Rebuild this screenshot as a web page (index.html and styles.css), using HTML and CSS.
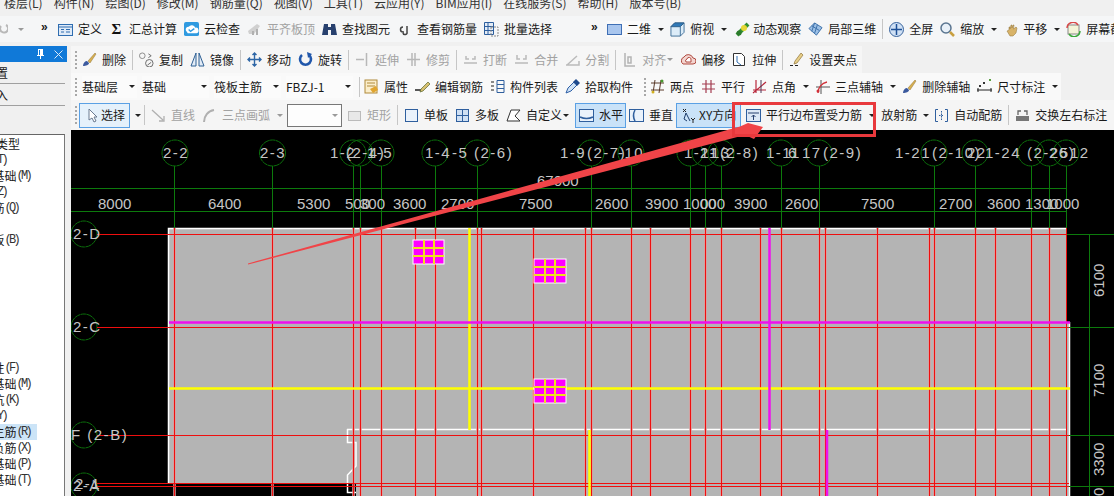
FILE: index.html
```html
<!DOCTYPE html>
<html lang="zh">
<head>
<meta charset="utf-8">
<title>钢筋布置</title>
<link rel="stylesheet" href="styles.css">
</head>
<body>
<nav class="menubar">
  <span class="m1">楼层(L)</span><span>构件(N)</span><span>绘图(D)</span><span>修改(M)</span><span>钢筋量(Q)</span><span>视图(V)</span><span>工具(T)</span><span>云应用(Y)</span><span>BIM应用(I)</span><span>在线服务(S)</span><span>帮助(H)</span><span>版本号(B)</span>
</nav>

<div class="row row1">
  <svg class="undo" viewBox="0 0 10 12"><path d="M8 2a4 4 0 1 1-5 1" fill="none" stroke="#b8b8b8" stroke-width="2"/></svg>
  <i class="caret gray c-undo"></i>
  <span class="more more-a">»</span>
  <div class="it"><svg class="ic" viewBox="0 0 15 15"><rect x=".5" y="2.5" width="14" height="11" fill="#dfeaf7" stroke="#2f6db0"/><path d="M.5 5h14M3 7.500h3M3 10h3M8 7.500h4M8 10h4" stroke="#2f6db0"/></svg>定义</div>
  <div class="it"><span class="ic sigma">Σ</span>汇总计算</div>
  <div class="it"><svg class="ic" viewBox="0 0 16 16"><rect width="16" height="15" rx="2" fill="#2f9ae0"/><path d="M2 9a3 3 0 0 1 3-4 4 4 0 0 1 7 1 3 3 0 0 1 1 6H4z" fill="#fff"/><path d="M5 8l2 2 4-3" fill="none" stroke="#2f9ae0" stroke-width="1.500"/></svg>云检查</div>
  <div class="it off"><svg class="ic" viewBox="0 0 15 15"><path d="M1 9l9-7 3 2-6 8H2z" fill="#d0d0d0"/><path d="M5 13V9h2v4zm4 0V7h2v6z" fill="#b0b0b0"/></svg>平齐板顶</div>
  <div class="it"><svg class="ic" viewBox="0 0 15 15"><path d="M2 2h4v3h3V2h4l2 11H9V8H6v5H0z" fill="#27406e"/></svg>查找图元</div>
  <div class="it"><svg class="ic" viewBox="0 0 15 15"><path d="M6 5a2.500 2.500 0 1 0 0 5h1M10 4v6a2 2 0 0 1-4 1" fill="none" stroke="#444" stroke-width="1.500"/></svg>查看钢筋量</div>
  <div class="it"><svg class="ic" viewBox="0 0 15 15"><path d="M.5.5h9v12h-9zM.5 4.500h9M.5 8.500h9M4 .5v12" fill="#e4ecf6" stroke="#2d5f9e"/><path d="M7 5h7v9H7z" fill="none" stroke="#888" stroke-dasharray="2 1"/></svg>批量选择</div>
  <span class="more more-b">»</span>
  <div class="it it-2d"><svg class="ic" viewBox="0 0 15 15"><rect x=".5" y="2.500" width="14" height="10" fill="#a9c6ee" stroke="#3f6fb5"/></svg>二维</div>
  <i class="caret"></i>
  <div class="it"><svg class="ic" viewBox="0 0 16 16"><path d="M1 5l4-4h10v10l-4 4H1z" fill="#dcecf8" stroke="#3d6d96"/><path d="M5 1h10L11 5H1z" fill="#2f79b8" stroke="#2f5f8a"/><path d="M11 5v10" stroke="#3d6d96"/></svg>俯视</div>
  <i class="caret c-gap"></i>
  <div class="it tight"><svg class="ic" viewBox="0 0 15 15"><path d="M2 13L13 2" stroke="#2f8f2f" stroke-width="4"/><circle cx="9" cy="6" r="3" fill="#e8d838"/><circle cx="4" cy="11" r="2.500" fill="#2c7a2c"/></svg>动态观察</div>
  <div class="it"><svg class="ic" viewBox="0 0 16 16"><path d="M1 7l6-6 8 5-6 8z" fill="#9cc0e6" stroke="#3a6ea8"/><path d="M4 4l8 5M7 1l-3 9M10 3l-3 9" stroke="#3a6ea8"/></svg>局部三维</div>
  <b class="sep"></b>
  <div class="it"><svg class="ic" viewBox="0 0 15 15"><circle cx="7.500" cy="7.500" r="7" fill="#cfe0f4" stroke="#36629c"/><path d="M7.500 2v11M2 7.500h11" stroke="#1d4f96" stroke-width="1.500"/></svg>全屏</div>
  <div class="it"><svg class="ic" viewBox="0 0 15 15"><circle cx="6" cy="6" r="5" fill="#e8f0f8" stroke="#5a7590" stroke-width="1.500"/><path d="M10 10l4 4" stroke="#c9a040" stroke-width="2.500"/></svg>缩放</div>
  <i class="caret c-gap"></i>
  <div class="it tight"><svg class="ic" viewBox="0 0 15 15"><path d="M2 9l2-1V5h1v2l1-4h1v3l1-3h1l-.5 4L11 5l1 1-1 5-3 3H5z" fill="#d8b368" stroke="#8f7338" stroke-width=".5"/></svg>平移</div>
  <i class="caret"></i>
  <div class="it"><svg class="ic" viewBox="0 0 15 15"><rect x="2" y="3" width="11" height="9" fill="#f4f4d8" stroke="#888"/><path d="M1 6a6 6 0 0 1 11-3" fill="none" stroke="#d84848" stroke-width="1.500"/><path d="M14 9a6 6 0 0 1-11 3" fill="none" stroke="#38a838" stroke-width="1.500"/></svg>屏幕截图</div>
</div>

<div class="work">
  <aside class="side">
    <div class="panel">
      <div class="title"><svg class="pin" viewBox="0 0 9 10"><path d="M2 0h5v6h1v1H5v3H4V7H1V6h1zM3 1v5h1V1z" fill="#fff"/></svg><svg class="close" viewBox="0 0 9 9"><path d="M.5.500l8 8M8.500.5l-8 8" stroke="#dbe9f8"/></svg></div>
      <div class="tab">置</div>
      <div class="tab">入</div>
      <ul class="list">
        <li class="e20">类型</li>
        <li class="e8"><span class="k">(T)</span></li>
        <li class="e32">基础<span class="k">(M)</span></li>
        <li class="e8"><span class="k">(Z)</span></li>
        <li class="e20">筋<span class="k">(Q)</span></li>
        <li></li>
        <li class="e20">板<span class="k">(B)</span></li>
        <li></li><li></li><li></li><li></li><li></li><li></li><li></li>
        <li class="e20">性<span class="k">(F)</span></li>
        <li class="e32">基础<span class="k">(M)</span></li>
        <li class="e20">坑<span class="k">(K)</span></li>
        <li class="e8"><span class="k">(Y)</span></li>
        <li class="e32 sel">主筋<span class="k">(R)</span></li>
        <li class="e32">负筋<span class="k">(X)</span></li>
        <li class="e32">基础<span class="k">(P)</span></li>
        <li class="e32">基础<span class="k">(T)</span></li>
      </ul>
    </div>
  </aside>

  <main class="main">
    <div class="row row2">
      <div class="band band2">
        <i class="grip g-start"></i>
        <div class="it"><svg class="ic" viewBox="0 0 15 15"><path d="M1 14c0-3 2-5 4-5l2 2c0 2-3 3-6 3z" fill="#3c5a9e"/><path d="M6 9l7-8 1 1-6 9z" fill="#d8b050" stroke="#8f7338" stroke-width=".5"/></svg>删除</div>
        <b class="sep"></b>
        <div class="it"><svg class="ic" viewBox="0 0 16 16"><circle cx="3.500" cy="4" r="3" fill="none" stroke="#888"/><circle cx="11" cy="12" r="4" fill="none" stroke="#666"/><path d="M10 2l3 2-3 2M13 11l-4 3" fill="none" stroke="#666"/></svg>复制</div>
        <div class="it"><svg class="ic" viewBox="0 0 15 15"><path d="M6 1L1 14h5zM9 1l5 13H9z" fill="#e2ebf6" stroke="#2f6094"/></svg>镜像</div>
        <b class="sep"></b>
        <div class="it"><svg class="ic" viewBox="0 0 15 15"><path d="M7.500 1v13M1 7.500h13M5.500 3l2-2 2 2M5.500 12l2 2 2-2M3 5.500l-2 2 2 2M12 5.500l2 2-2 2" fill="none" stroke="#2e66a6" stroke-width="1.400"/></svg>移动</div>
        <div class="it"><svg class="ic" viewBox="0 0 15 15"><path d="M4 3a5.500 5.500 0 1 0 7 0" fill="none" stroke="#2157ab" stroke-width="2.600"/><path d="M9 0l1 6 4-4z" fill="#2157ab"/></svg>旋转</div>
        <b class="sep"></b>
        <div class="it off"><svg class="ic" viewBox="0 0 15 15"><path d="M1 7.500h8M11.500 1v13" stroke="#b8b8b8" stroke-width="1.500"/></svg>延伸</div>
        <div class="it off"><svg class="ic" viewBox="0 0 15 15"><path d="M1 7.500h13M6 1v13M9 1v13" stroke="#b8b8b8" stroke-width="1.500"/></svg>修剪</div>
        <b class="sep"></b>
        <div class="it off"><svg class="ic" viewBox="0 0 15 15"><path d="M1 11h13M3 4v3h3M12 4v3H9" fill="none" stroke="#bbb" stroke-width="1.500"/></svg>打断</div>
        <div class="it off"><svg class="ic" viewBox="0 0 15 15"><path d="M1 11h13M3 3v4h3M12 3v4H9" fill="none" stroke="#bbb" stroke-width="1.500"/></svg>合并</div>
        <div class="it off"><svg class="ic" viewBox="0 0 15 15"><path d="M1 13h13V9M2 13l10-9" fill="none" stroke="#bbb" stroke-width="1.500"/></svg>分割</div>
        <b class="sep"></b>
        <div class="it off"><svg class="ic" viewBox="0 0 15 15"><path d="M3 1v13h10M6 5h3v6H6z" fill="none" stroke="#b4b4b4" stroke-width="1.500"/></svg>对齐</div>
        <i class="caret gray c-tuck c-gap"></i>
        <div class="it"><svg class="ic" viewBox="0 0 15 15"><path d="M2 12a4 4 0 0 1 1-7 5 5 0 0 1 9 1 3 3 0 0 1 0 6z" fill="#f3d5d0" stroke="#b04a40"/><path d="M5 10a2 2 0 0 1 1-3 2 2 0 0 1 4 1v2z" fill="#fff" stroke="#b04a40"/></svg>偏移</div>
        <div class="it"><svg class="ic" viewBox="0 0 15 15"><path d="M1.500 1.500h8l3 3v9h-11z" fill="#fff" stroke="#333"/><path d="M5 4v6l4 3" fill="none" stroke="#2f6db0"/></svg>拉伸</div>
        <b class="sep"></b>
        <div class="it"><svg class="ic" viewBox="0 0 15 15"><path d="M1 13h3v1H1zM6 13h3v1H6z" fill="#222"/><path d="M6 9l6-8 2 2-6 8-3 1z" fill="#e8cf88" stroke="#8f7338" stroke-width=".7"/></svg>设置夹点</div>
      </div>
    </div>

    <div class="row row3">
      <div class="band band3">
        <i class="grip g-start"></i>
        <div class="combos">
          <div class="combo cw-s">基础层<i class="caret"></i></div>
          <div class="combo cw-m">基础<i class="caret"></i></div>
          <div class="combo cw-m">筏板主筋<i class="caret"></i></div>
          <div class="combo cw-m">FBZJ-1<i class="caret"></i></div>
        </div>
        <b class="sep"></b>
        <div class="it it-prop"><svg class="ic" viewBox="0 0 15 15"><rect x="1" y="1" width="12" height="13" fill="#fbeecb" stroke="#b08a3a"/><path d="M3 4h8M3 7h8" stroke="#b08a3a"/><path d="M6 10l6-3 2 4-5 3z" fill="#e0a530"/></svg>属性</div>
        <div class="it"><svg class="ic" viewBox="0 0 15 15"><path d="M0 11h8" stroke="#222" stroke-width="1.500"/><path d="M6 10l7-7 2 2-7 7-3 1z" fill="#d8c070" stroke="#57662f" stroke-width=".7"/></svg>编辑钢筋</div>
        <div class="it"><svg class="ic" viewBox="0 0 15 15"><path d="M1 2h3v2H1zM1 6h3v2H1zM1 10h3v2H1z" fill="#8a8a8a"/><path d="M7 1.500h7v12H7zM7 5.500h7M7 9.500h7" fill="none" stroke="#2f5f9e"/></svg>构件列表</div>
        <div class="it"><svg class="ic" viewBox="0 0 15 15"><path d="M1 14l2-5 6-6 3 3-6 6z" fill="#cfe2f6" stroke="#2e5fa6"/><path d="M8 3l3-3 4 4-3 3z" fill="#1e4a8e"/></svg>拾取构件</div>
        <i class="grip g-mid"></i>
        <div class="it"><svg class="ic" viewBox="0 0 15 15"><path d="M1 4h13M1 11h13M5 1l-2 13M11 1L9 14" stroke="#5a3a2a"/><circle cx="3" cy="13" r="1.500" fill="#d2b020"/><circle cx="12" cy="2" r="1.500" fill="#4a9a30"/></svg>两点</div>
        <div class="it"><svg class="ic" viewBox="0 0 15 15"><path d="M1 5h13M1 10h13M5 1v13M10 1v13" stroke="#a33c50" stroke-width="1.200"/></svg>平行</div>
        <div class="it"><svg class="ic" viewBox="0 0 15 15"><path d="M4 1v13M1 11h13M1 14L14 3" stroke="#b8283c" stroke-width="1.200"/><path d="M9 1v13" stroke="#4a3a5a"/></svg>点角</div>
        <i class="caret"></i>
        <div class="it"><svg class="ic" viewBox="0 0 15 15"><path d="M1 8h14M6 1v14" stroke="#555"/><path d="M3 14a11 11 0 0 1 9-11" fill="none" stroke="#d03038" stroke-width="1.300"/><circle cx="3" cy="12" r="1.500" fill="#d03038"/></svg>三点辅轴</div>
        <i class="caret"></i>
        <div class="it"><svg class="ic" viewBox="0 0 15 15"><path d="M1 14c0-3 2-5 4-5l2 2c0 2-3 3-6 3z" fill="#3c5a9e"/><path d="M6 9l7-8 1 1-6 9z" fill="#d8b050" stroke="#8f7338" stroke-width=".5"/></svg>删除辅轴</div>
        <div class="it"><svg class="ic" viewBox="0 0 15 15"><path d="M0 11h15M1 9v4M14 9v4" stroke="#222"/><path d="M2 6h2v2H2zM6 3h2v2H6z" fill="#333"/><rect x="12" y="0" width="2" height="2" fill="#5aa040"/></svg>尺寸标注</div>
        <i class="caret"></i>
      </div>
    </div>

    <div class="row row4">
      <i class="grip g-tool"></i>
      <div class="it btn btn-select"><svg class="ic" viewBox="0 0 15 15"><path d="M4 1v11l3-2 2 4 2-1-2-4h3z" fill="#fff" stroke="#6a7a90"/></svg>选择</div>
      <i class="caret c-sel"></i>
      <b class="sep"></b>
      <div class="it off"><svg class="ic" viewBox="0 0 15 15"><path d="M1 2l11 10M13 8v5H8" fill="none" stroke="#b0b0b0" stroke-width="1.300"/></svg>直线</div>
      <div class="it off"><svg class="ic" viewBox="0 0 15 15"><path d="M2 14C2 8 6 3 12 2" fill="none" stroke="#b0b0b0" stroke-width="2"/></svg>三点画弧</div>
      <i class="caret gray"></i>
      <div class="selectbox"><i class="caret gray"></i></div>
      <div class="it off"><svg class="ic" viewBox="0 0 15 15"><rect x="1.500" y="3.500" width="12" height="9" fill="#e8e8e8" stroke="#bbb"/></svg>矩形</div>
      <b class="sep"></b>
      <div class="it"><svg class="ic" viewBox="0 0 15 15"><rect x="1.500" y="1.500" width="12" height="12" fill="#eaf2fb" stroke="#2f5f9e"/></svg>单板</div>
      <div class="it"><svg class="ic" viewBox="0 0 15 15"><rect x="1.500" y="1.500" width="12" height="12" fill="#cfe0f4" stroke="#2f5f9e"/><path d="M7.500 1.500v12M1.500 7.500h12" stroke="#2f5f9e"/></svg>多板</div>
      <div class="it"><svg class="ic" viewBox="0 0 15 15"><path d="M5 2h9l-5 6 5 5H1z" fill="#fff" stroke="#333"/></svg>自定义</div>
      <i class="caret c-tuck"></i>
      <div class="it btn btn-on btn-h"><svg class="ic" viewBox="0 0 15 15"><rect x=".5" y="1.500" width="14" height="12" fill="#eaf2fb" stroke="#2f5f9e"/><path d="M1 9q6.500 3 13 0" fill="none" stroke="#2f5f9e" stroke-width="1.500"/></svg>水平</div>
      <div class="it it-v"><svg class="ic" viewBox="0 0 15 15"><rect x=".5" y="1.500" width="14" height="12" fill="#eaf2fb" stroke="#2f5f9e"/><path d="M6 2q-3 5.500 0 11" fill="none" stroke="#2f5f9e" stroke-width="1.500"/></svg>垂直</div>
      <div class="it btn btn-on btn-xy"><svg class="ic" viewBox="0 0 15 15"><path d="M5 5l-2 6 3 2M5 5l4 8" fill="none" stroke="#1f3f6e"/><path d="M2 1l3 3M5 1L2 4M10 10l2 2 2-2M12 12v3" stroke="#222" fill="none"/></svg>XY方向</div>
      <div class="it"><svg class="ic" viewBox="0 0 15 15"><rect x=".5" y="1.500" width="14" height="12" fill="#dce8f6" stroke="#2f5f9e"/><path d="M2 5h11M7.500 12V7M5.500 9l2-2 2 2" fill="none" stroke="#27406e"/></svg>平行边布置受力筋</div>
      <i class="caret"></i>
      <div class="it it-plain">放射筋</div>
      <i class="caret c-pull"></i>
      <div class="it"><svg class="ic" viewBox="0 0 15 15"><path d="M4 1.500H1.500v12H4M11 1.500h2.500v12H11" fill="none" stroke="#2f5f9e"/><path d="M7.500 3v9M5 7.500h5" stroke="#2f5f9e" stroke-dasharray="1.500 1"/></svg>自动配筋</div>
      <b class="sep"></b>
      <div class="it"><svg class="ic" viewBox="0 0 15 15"><path d="M1 8h13v5H1z" fill="#777"/><path d="M3 7V3h3M12 7V3H9" fill="none" stroke="#666" stroke-width="1.300"/></svg>交换左右标注</div>
    </div>

    <svg class="cad" viewBox="71 130 1043 366" aria-label="筏板布置图">
      <polygon class="slab" points="168,228 1066,228 1066,322 1069,322 1069,496 356,496 356,483 168,483"/>
      <path class="slab-edge" d="M168.500 483V228.500H1066M1069.500 322V496M347 429.500H1066M347.500 429V442.500H356V466L347.500 475V492.500H356"/>

      <path class="grid-green" d="M71 188.500H1066M71 211.500H1066M174.500 166V228M272.500 166V228M353.500 166V228M360.500 166V228M381.500 166V228M435.500 166V228M477.500 166V228M591.500 166V228M631.500 166V228M690.500 166V228M705.500 166V228M721.500 166V228M781.500 166V228M819.500 166V228M934.500 166V228M975.500 166V228M1031.500 166V228M1049.500 166V228M1066.500 166V228M1066 234.500H1114M1069 327.500H1114M1069 435.500H1114M1069 486.500H1114M1089.500 234V496"/>

      <g class="bubbles">
        <circle cx="175" cy="153" r="13"/><circle cx="272.500" cy="153" r="13"/><circle cx="353" cy="153" r="13"/><circle cx="360" cy="153" r="13"/><circle cx="381" cy="153" r="13"/><circle cx="435" cy="153" r="13"/><circle cx="477" cy="153" r="13"/><circle cx="591" cy="153" r="13"/><circle cx="631" cy="153" r="13"/><circle cx="690" cy="153" r="13"/><circle cx="705" cy="153" r="13"/><circle cx="721" cy="153" r="13"/><circle cx="781" cy="153" r="13"/><circle cx="819" cy="153" r="13"/><circle cx="934" cy="153" r="13"/><circle cx="975" cy="153" r="13"/><circle cx="1031" cy="153" r="13"/><circle cx="1049" cy="153" r="13"/><circle cx="1066" cy="153" r="13"/>
        <circle cx="84" cy="234" r="13"/><circle cx="84" cy="327" r="13"/><circle cx="84" cy="435" r="13"/><circle cx="84" cy="486" r="13"/>
      </g>

      <path class="grid-halo" d="M174.500 228V496M272.500 228V496M353.500 228V496M360.500 228V496M381.500 228V496M415.500 228V496M435.500 228V496M477.500 228V496M481.500 228V496M533.500 228V496M585.500 228V496M591.500 228V496M631.500 228V496M650.500 228V496M690.500 228V496M705.500 228V496M721.500 228V496M760.500 228V496M781.500 228V496M819.500 228V496M825.500 228V496M877.500 228V496M929.500 228V496M934.500 228V496M975.500 228V496M995.500 228V496M1031.500 228V496M1049.500 228V496"/>
      <path class="grid-red" d="M174.500 228V496M272.500 228V496M353.500 228V496M360.500 228V496M381.500 228V496M415.500 228V496M435.500 228V496M477.500 228V496M481.500 228V496M533.500 228V496M585.500 228V496M591.500 228V496M631.500 228V496M650.500 228V496M690.500 228V496M705.500 228V496M721.500 228V496M760.500 228V496M781.500 228V496M819.500 228V496M825.500 228V496M877.500 228V496M929.500 228V496M934.500 228V496M975.500 228V496M995.500 228V496M1031.500 228V496M1049.500 228V496M1066.500 228V496M97 234.500H1066M97 327.500H1069M97 435.500H1069M97 483.500H1069M97 486.500H1069"/>

      <path class="beam-yellow" d="M169 388.500H1070M469.500 228V430M589.500 430V496"/>
      <path class="beam-magenta" d="M169 322.500H1070M769.500 228V430M827 430V496"/>

      <g>
        <rect class="pad-edge" x="413" y="240" width="31" height="24"/><path class="pad-grid" d="M424 240v24M434 240v24M413 248h31M413 256h31"/>
        <rect class="pad-edge" x="534" y="259" width="32" height="24"/><path class="pad-grid" d="M545 259v24M555 259v24M534 267h32M534 275h32"/>
        <rect class="pad-edge" x="534" y="379" width="32" height="24"/><path class="pad-grid" d="M545 379v24M555 379v24M534 387h32M534 395h32"/>
      </g>

      <g class="dim">
        <text x="98" y="209">8000</text><text x="208" y="209">6400</text><text x="297" y="209">5300</text><text x="345" y="209">500</text><text x="360" y="209">300</text><text x="393" y="209">3600</text><text x="441" y="209">2700</text><text x="519" y="209">7500</text><text x="595" y="209">2600</text><text x="645" y="209">3900</text><text x="683" y="209">1000</text><text x="700" y="209">000</text><text x="734" y="209">3900</text><text x="785" y="209">2600</text><text x="861" y="209">7500</text><text x="939" y="209">2700</text><text x="987" y="209">3600</text><text x="1025" y="209">1300</text><text x="1046" y="209">1000</text>
        <text x="537" y="186">67000</text>
        <text transform="translate(1104 297) rotate(-90)">6100</text>
        <text transform="translate(1104 397) rotate(-90)">7100</text>
        <text transform="translate(1104 476) rotate(-90)">3300</text>
        <text transform="translate(1104 496) rotate(-90)">0</text>
      </g>
      <g class="axis">
        <text x="163" y="158">2-2</text><text x="260" y="158">2-3</text><text x="330" y="158">1-2</text><text x="346" y="158">(2-4)</text><text x="367" y="158">1-5</text><text x="425" y="158">1-4</text><text x="452" y="158">-5</text><text x="474" y="158">(2-6)</text><text x="560" y="158">1-9</text><text x="587" y="158">(2-7)</text><text x="618" y="158">-10</text><text x="684" y="158">1-11</text><text x="700" y="158">2-</text><text x="711" y="158">13</text><text x="720" y="158">(2-8)</text><text x="766" y="158">1-11</text><text x="788" y="158">6</text><text x="802" y="158">17</text><text x="823" y="158">(2-9)</text><text x="895" y="158">1-21</text><text x="932" y="158">(2-10)</text><text x="967" y="158">22</text><text x="985" y="158">1-24</text><text x="1027" y="158">(2-25</text><text x="1049" y="158">26)</text><text x="1070" y="158">12</text>
        <text x="73" y="239">2-D</text><text x="73" y="332">2-C</text><text x="71" y="440">F (2-B)</text><text x="73" y="491">2-A</text><text x="75" y="489">2-1</text>
      </g>
    </svg>
  </main>
</div>

<svg class="markup" viewBox="0 0 1114 496">
  <polygon class="arrow" points="248,263.500 740,126.500 748,123 763,127 754,139 745,135 248,264.500"/>
  <rect class="callout" x="733.500" y="103.500" width="141" height="32"/>
</svg>
</body>
</html>
```

FILE: styles.css
```css
* { box-sizing: border-box; }
html, body { margin: 0; padding: 0; }
body {
  width: 1114px;
  height: 496px;
  overflow: hidden;
  position: relative;
  background: #f0f0f0;
  color: #1a1a1a;
  font: 12px/16px "Noto Sans CJK SC", "Liberation Sans", sans-serif;
}

.menubar { height: 16px; display: flex; gap: 11px; padding-left: 4px; line-height: 6px; overflow: hidden; white-space: nowrap; color: #333; }

.row { display: flex; align-items: center; gap: 7px; white-space: nowrap; overflow: hidden; }
.row1 { height: 30px; padding-bottom: 4px; background: linear-gradient(#f5f6f7 26px, #f0f0f0 26px); }
.row2, .row3 { height: 27px; }
.row4 { height: 30px; background: #f5f5f5; }

.band { display: flex; align-items: center; gap: 7px; height: 100%; }
.band2 { padding: 0 5px 0 4px; background: #f6f6f6; }
.band3 { padding: 0 4px 0 4px; background: #f9f9f9; }

.it { display: flex; align-items: center; gap: 5px; flex: none; }
.it.tight { gap: 3px; }
.it.off { color: #a2a2a2; }
.ic { width: 15px; height: 15px; flex: none; display: block; }
.sigma { font: bold 15px/15px "Liberation Serif", serif; text-align: center; color: #111; }

.sep { flex: none; width: 1px; height: 20px; margin: 0 -1px; background: #c6c6c6; }
.grip { flex: none; width: 2px; height: 18px; background-image: linear-gradient(#a8a8a8 50%, transparent 50%); background-size: 2px 4px; }
.g-start { margin-right: -2px; }
.g-mid { margin: 0 -3px 0 4px; }
.g-tool { margin-left: 4px; margin-right: -5px; }

.caret { flex: none; width: 0; height: 0; margin-right: -1px; border: 3px solid transparent; border-top: 3px solid #222; border-bottom: 0; display: block; }
.caret.gray { border-top-color: #9a9a9a; }
.c-gap { margin-right: 1px; }
.c-tuck { margin-left: -6px; }
.c-pull { margin-left: -1px; margin-right: -2px; }
.c-sel { margin-left: -2px; margin-right: -3px; }

.more { flex: none; width: 8px; font: bold 12px/10px "Liberation Sans", sans-serif; align-self: flex-start; margin-top: 6px; }
.more-a { margin-left: 2px; margin-right: 2px; }
.more-b { margin-left: 32px; margin-right: 1px; }
.undo { width: 10px; height: 12px; flex: none; margin-left: -2px; }
.c-undo { margin-left: 3px; margin-right: 8px; }
.it-2d { background: #fafafa; }

.combos { display: flex; gap: 5px; }
.combo { display: flex; align-items: center; justify-content: space-between; height: 22px; padding-right: 3px; background: #fbfbfb; flex: none; }
.cw-s { width: 55px; }
.cw-m { width: 67px; }
.it-prop { margin-left: -2px; }

.btn { height: 25px; border: 1px solid #5aa0e4; }
.btn-select { width: 51px; padding-left: 5px; gap: 1px; background: #e5f1fb; }
.btn-on { background: #c9e2f8; }
.btn-h { width: 51px; padding-left: 3px; }
.it-v { margin-left: -4px; margin-right: -4px; }
.btn-xy { width: 65px; padding-left: 4px; gap: 3px; margin-right: -2px; }
.selectbox { flex: none; width: 55px; height: 23px; border: 1px solid #777; background: #fdfdfd; margin: 0 -2px 0 -2px; display: flex; align-items: center; justify-content: flex-end; padding-right: 4px; }

.work { display: flex; height: 450px; }
.side { flex: none; width: 71px; height: 100%; overflow: hidden; }
.panel { width: 65px; height: 100%; display: flex; flex-direction: column; }
.title { height: 16px; background: #1079d8; display: flex; align-items: center; justify-content: flex-end; gap: 9px; padding-right: 4px; margin-right: -2px; }
.pin { width: 9px; height: 10px; }
.close { width: 9px; height: 9px; }
.tab { height: 22px; margin-left: -5px; padding-left: 1px; border-bottom: 1px solid #a0a0a0; line-height: 21px; background: #f0f0f0; }
.list { list-style: none; margin: 28px 0 0; padding: 1px 0 0; flex: 1; background: #fff; border-top: 1px solid #666; border-right: 1px solid #777; font-size: 12px; overflow: hidden; }
.list li { height: 16px; line-height: 16px; display: flex; justify-content: flex-end; white-space: nowrap; }
.e8 { width: 8px; }
.e20 { width: 20px; }
.e32 { width: 32px; }
.k { font: 12px/16px "Liberation Mono", monospace; letter-spacing: -2.700px; padding-right: 2px; color: #333; }
.list .sel { width: 37px; padding-right: 5px; background: #cce4f7; }

.main { flex: 1; min-width: 0; display: flex; flex-direction: column; }
.cad { display: block; width: 1043px; height: 366px; background: #000; flex: none; }

.slab { fill: #b4b4b4; }
.slab-edge { fill: none; stroke: #fff; stroke-width: 1.500; }
.grid-green { fill: none; stroke: #0c7a0c; stroke-width: 1; }
.bubbles circle { fill: none; stroke: #0b6e0b; stroke-width: 1; stroke-dasharray: 6 .4; }
.grid-halo { fill: none; stroke: #dd9a9a; stroke-width: 2.500; }
.grid-red { fill: none; stroke: #ee0f0f; stroke-width: 1; }
.beam-yellow { fill: none; stroke: #ffff00; stroke-width: 2.500; }
.beam-magenta { fill: none; stroke: #ee10ee; stroke-width: 2.500; }
.pad-edge { fill: #ff00ff; stroke: #fff; stroke-width: 1; }
.pad-grid { fill: none; stroke: #f0e020; stroke-width: 2; }
.dim text { font: 15px "Liberation Sans", sans-serif; fill: #c6c6c6; }
.axis text { font: 15px "Liberation Sans", sans-serif; letter-spacing: 1.500px; fill: #c6c6c6; }

.markup { position: absolute; left: 0; top: 0; width: 1114px; height: 496px; pointer-events: none; }
.arrow { fill: #f04448; }
.callout { fill: none; stroke: #e8383c; stroke-width: 3; }
```
